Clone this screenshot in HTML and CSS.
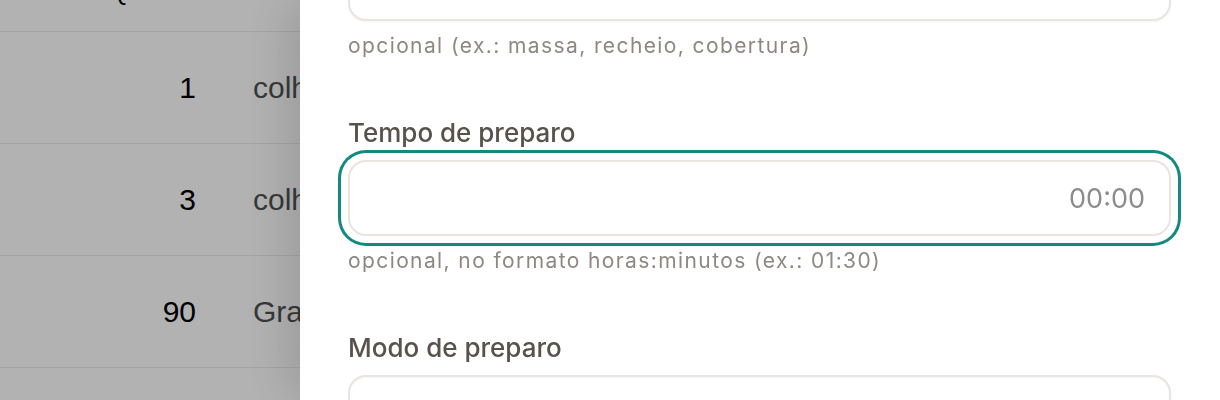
FILE: index.html
```html
<!DOCTYPE html>
<html lang="pt-BR">
<head>
<meta charset="utf-8">
<title>Receita</title>
<link rel="stylesheet" href="styles.css">
</head>
<body>
  <main class="page">
    <div class="table">
      <div class="row head">
        <div class="cell name"></div>
        <div class="cell qty">QTD.</div>
        <div class="cell unit">Unid.</div>
      </div>
      <div class="row">
        <div class="cell name"></div>
        <div class="cell qty">1</div>
        <div class="cell unit">colher de sopa</div>
      </div>
      <div class="row">
        <div class="cell name"></div>
        <div class="cell qty">3</div>
        <div class="cell unit">colher de sopa</div>
      </div>
      <div class="row">
        <div class="cell name"></div>
        <div class="cell qty">90</div>
        <div class="cell unit">Gramas</div>
      </div>
      <div class="row">
        <div class="cell name"></div>
        <div class="cell qty"></div>
        <div class="cell unit"></div>
      </div>
    </div>
  </main>
  <div class="overlay"></div>
  <aside class="panel">
    <div class="field first">
      <div class="input"></div>
      <p class="help">opcional (ex.: massa, recheio, cobertura)</p>
    </div>
    <div class="field">
      <label class="label">Tempo de preparo</label>
      <div class="input focus"><span class="placeholder">00:00</span></div>
      <p class="help">opcional, no formato horas:minutos (ex.: 01:30)</p>
    </div>
    <div class="field">
      <label class="label">Modo de preparo</label>
      <div class="input tall"></div>
    </div>
  </aside>
</body>
</html>
```

FILE: styles.css
```css
* { box-sizing: border-box; }
html, body { margin: 0; padding: 0; height: 100%; overflow: hidden; }
body { background: #fff; font-family: "Liberation Sans", Arial, sans-serif; }

.page { width: 100%; }
.table { margin-top: -28px; }
.row {
  display: grid;
  grid-template-columns: 110px 86px 1fr;
  height: 112px;
  align-items: center;
  border-bottom: 1px solid #ececec;
  font-size: 30px;
}
.row.head {
  height: 60px;
  align-items: start;
  font-size: 24px;
  color: #666;
  text-transform: uppercase;
  letter-spacing: 1px;
}
.row.head .cell { padding-top: 6px; }
.row.head .qty { padding-right: 31px; }
.qty { text-align: right; color: #000; }
.unit { color: #505050; white-space: nowrap; padding-left: 57px; }

.overlay {
  position: fixed;
  inset: 0;
  background: rgba(0, 0, 0, 0.3);
}

.panel {
  position: fixed;
  top: 0;
  bottom: 0;
  left: 300px;
  right: 0;
  background: #fff;
  padding: 0 49px 0 48px;
  box-shadow: -8px 0 50px rgba(0, 0, 0, 0.16);
  font-family: Inter, "Noto Sans", sans-serif;
  display: flex;
  flex-direction: column;
}

.field.first { margin-top: -55px; }
.field { display: flex; flex-direction: column; }

.label {
  display: block;
  margin-top: 57px;
  font-size: 26px;
  line-height: 32px;
  font-weight: 500;
  color: #57524c;
}

.input {
  height: 76px;
  border: 2px solid #e8e4df;
  border-radius: 18px;
  background: #fff;
  box-shadow: inset 0 1px 2px rgba(0, 0, 0, 0.04), 0 1px 2px rgba(0, 0, 0, 0.04);
  display: flex;
  align-items: center;
  justify-content: flex-end;
  padding: 0 24px;
}
.label + .input { margin-top: 11px; }
.input.focus {
  box-shadow: 0 0 0 7px #fff, 0 0 0 10px #13897f;
}
.input.tall { height: 160px; }

.placeholder {
  font-size: 27px;
  color: #8c8c8c;
}

.help {
  margin: 11px 0 0;
  font-size: 21px;
  line-height: 28px;
  letter-spacing: 1.4px;
  color: #8d8882;
}
```
